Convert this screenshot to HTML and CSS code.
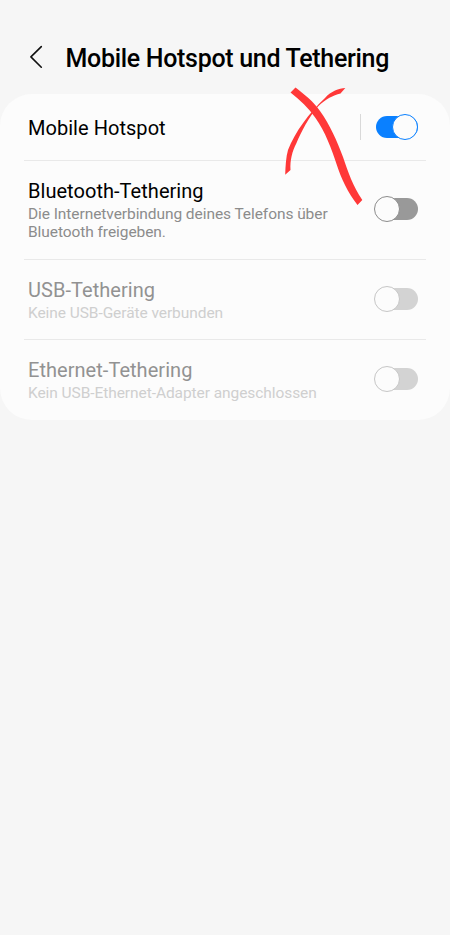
FILE: index.html
```html
<!DOCTYPE html>
<html lang="de">
<head>
	<meta charset="UTF-8">
	<title>Mobile Hotspot und Tethering</title>
	<link rel="stylesheet" href="styles.css">
</head>
<body>
	<div class="top">
		<svg class="back" width="14" height="24" viewBox="0 0 14 24"><path d="M12.3 1.6L1.9 11.9L12.3 22.2"/></svg>
		<h1>Mobile Hotspot und Tethering</h1>
	</div>
	<div class="content">
		<div class="row hotspot">
			<div class="text"><span class="name">Mobile Hotspot</span></div>
			<span class="line"></span>
			<span class="switch on"></span>
		</div>
		<div class="row bluetooth">
			<div class="text">
				<span class="name">Bluetooth-Tethering</span>
				<span class="info">Die Internetverbindung deines Telefons über<br>Bluetooth freigeben.</span>
			</div>
			<span class="switch"></span>
		</div>
		<div class="row usb disabled">
			<div class="text">
				<span class="name">USB-Tethering</span>
				<span class="info">Keine USB-Geräte verbunden</span>
			</div>
			<span class="switch"></span>
		</div>
		<div class="row ethernet disabled">
			<div class="text">
				<span class="name">Ethernet-Tethering</span>
				<span class="info">Kein USB-Ethernet-Adapter angeschlossen</span>
			</div>
			<span class="switch"></span>
		</div>
		<svg class="cross" width="90" height="125" viewBox="280 85 90 125">
			<path d="M295.5 87.5C304 94 314 102 320 111C330 125 337 141 343 157C348 172 353 186 362.300 200L357.500 205C348 193 341 178 336.500 164C332 150 325 131 315.500 118C308.500 108 300 100 290.500 92.500Z"/>
			<path d="M345.300 88C339 88.500 331 91 325 98C309 113 295 132 288 150C286 157 285.500 166 285.200 174.800L290.500 170C290 160 292 152 296.500 143C301 132 309 117 318 106.500C326 98.500 333 95.500 340.500 93.500Z"/>
		</svg>
	</div>
</body>
</html>
```

FILE: styles.css
```css
body{margin: 0;background-color: #f6f6f6;font-family: Roboto,"Liberation Sans",sans-serif;color: #000;}
.top{display: flex;height: 94px;box-sizing: border-box;padding: 43px 0 0 29px;}
.top h1{margin: 0 0 0 22.500px;font-size: 25px;line-height: 32px;font-weight: 500;letter-spacing: -0.310px;white-space: nowrap;}
.back{margin-top: 2px;fill: none;stroke: #111;stroke-width: 1.600;stroke-linecap: round;stroke-linejoin: round;}
.content{position: relative;background-color: #fcfcfc;border-radius: 32px;height: 325.500px;}
.row{position: relative;display: flex;align-items: center;box-sizing: border-box;padding: 0 32px 0 28px;}
.row + .row::before{content: "";position: absolute;left: 24px;right: 24px;top: 0;height: 1px;background-color: #e9e9e9;}
.hotspot{height: 66px;}
.bluetooth{height: 99px;padding-bottom: 1px;}
.usb{height: 80px;}
.ethernet{height: 80.500px;}
.text{flex: 1;white-space: nowrap;}
.text span{display: block;}
.hotspot .text,.disabled .text{padding-top: 2px;}
.name{font-size: 20px;line-height: 24px;letter-spacing: 0.040px;}
.info{margin-top: 2px;font-size: 15.500px;line-height: 18px;letter-spacing: -0.070px;color: #8c8c8c;}
.bluetooth .name{padding-top: 1px;}
.line{width: 1px;height: 26px;margin-right: 15px;background-color: #d9d9d9;}
.switch{position: relative;width: 42px;height: 22px;border-radius: 11px;background-color: #999;}
.switch::after{content: "";position: absolute;left: -2px;top: -2px;width: 26px;height: 26px;box-sizing: border-box;border: 1px solid #8c8c8c;border-radius: 50%;background-color: #fcfcfc;}
.on{background-color: #0a80ff;}
.on::after{left: 16px;border-color: #0a80ff;}
.disabled .name{color: #929292;}
.disabled .info{color: #cfcfcf;}
.disabled .switch{background-color: #d3d3d3;}
.disabled .switch::after{border-color: #c6c6c6;}
/* red marking over the first two rows */
.cross{position: absolute;left: 280px;top: -9px;fill: #ff3838;}
```
